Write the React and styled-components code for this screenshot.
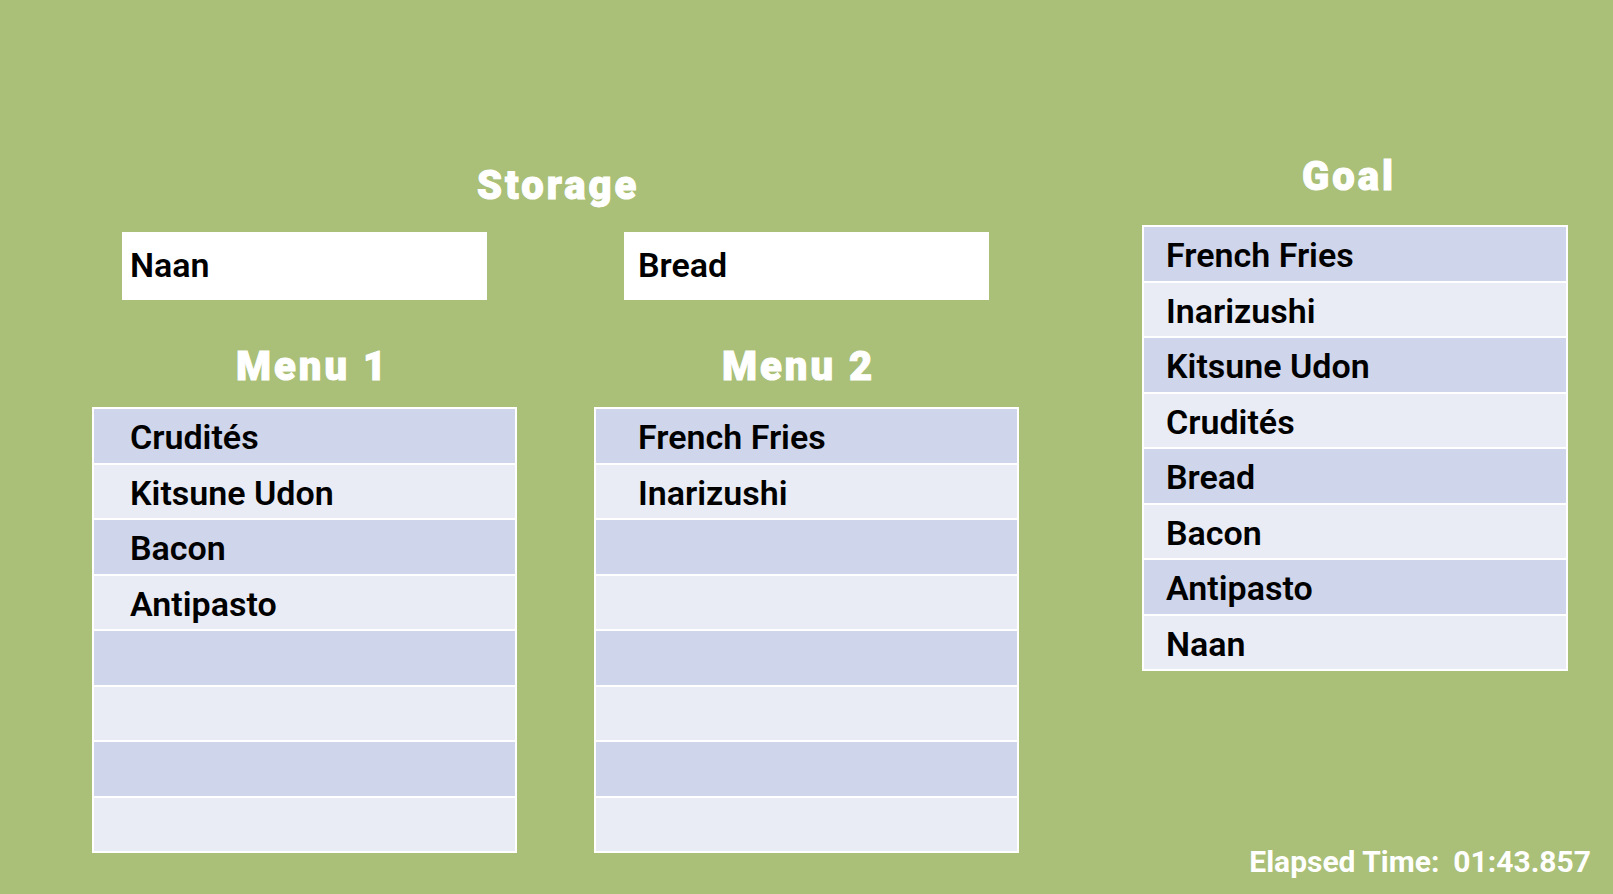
import React from "react";
import styled, { createGlobalStyle } from "styled-components";

const GlobalStyle = createGlobalStyle`
  *, *::before, *::after { box-sizing: border-box; }
  body {
    margin: 0;
    background: #aabf77;
    font-family: Roboto, "Liberation Sans", sans-serif;
  }
`;

const Page = styled.main`
  display: grid;
  grid-template-columns: 927fr 449fr;
  column-gap: 123px;
  min-height: 100vh;
  padding: 153px 22px 14px 92px;
`;

const Kitchen = styled.section`
  padding-top: 9px;
`;

const Sidebar = styled.aside`
  display: flex;
  flex-direction: column;
  justify-content: space-between;
`;

const GoalArea = styled.div`
  padding-right: 23px;
`;

const Columns = styled.div`
  display: grid;
  grid-template-columns: 1fr 1fr;
  column-gap: 77px;
`;

const Title = styled.h2`
  margin: 0;
  padding-left: ${(p) => p.$indent}px;
  color: #fff;
  font-size: 40px;
  line-height: 48px;
  font-weight: 900;
  letter-spacing: 3px;
  -webkit-text-stroke: 1px #fff;
  white-space: nowrap;
`;

const Slot = styled.div`
  display: flex;
  align-items: center;
  height: 68px;
  margin: 22px 30px 43px;
  padding: 0 0 2px ${(p) => p.$inset}px;
  background: #fff;
  font-size: 34px;
  line-height: 40px;
  font-weight: 600;
`;

const List = styled.ol`
  display: grid;
  grid-auto-rows: 1fr;
  gap: 2px;
  height: 446px;
  margin: ${(p) => p.$space}px 0 0;
  padding: 2px;
  background: #fff;
  list-style: none;
`;

const Item = styled.li`
  display: flex;
  align-items: center;
  padding: 3px 0 0 ${(p) => p.$inset}px;
  background: #e9ebf5;
  color: #000;
  font-size: 34px;
  line-height: 40px;
  font-weight: 600;
  white-space: nowrap;

  &:nth-child(odd) { background: #cfd5ea; }
`;

const Elapsed = styled.p`
  display: flex;
  justify-content: flex-end;
  gap: 14px;
  margin: 0;
  color: #fff;
  font-size: 30px;
  line-height: 36px;
  font-weight: 700;
  white-space: nowrap;
`;

const ROWS = 8;

function Menu({ title, items, indent, inset, space }) {
  return (
    <section>
      <Title $indent={indent}>{title}</Title>
      <List $space={space}>
        {Array.from({ length: ROWS }, (_, i) => (
          <Item key={i} $inset={inset}>{items[i]}</Item>
        ))}
      </List>
    </section>
  );
}

export default function App() {
  return (
    <Page>
      <GlobalStyle />
      <Kitchen>
        <Title $indent={385}>Storage</Title>
        <Columns>
          <Slot $inset={8}>Naan</Slot>
          <Slot $inset={14}>Bread</Slot>
          <Menu
            title="Menu 1"
            indent={144}
            inset={36}
            space={16}
            items={["Crudités", "Kitsune Udon", "Bacon", "Antipasto"]}
          />
          <Menu
            title="Menu 2"
            indent={128}
            inset={42}
            space={16}
            items={["French Fries", "Inarizushi"]}
          />
        </Columns>
      </Kitchen>
      <Sidebar>
        <GoalArea>
          <Menu
            title="Goal"
            indent={160}
            inset={22}
            space={24}
            items={["French Fries", "Inarizushi", "Kitsune Udon", "Crudités", "Bread", "Bacon", "Antipasto", "Naan"]}
          />
        </GoalArea>
        <Elapsed>
          <span>Elapsed Time:</span>
          <time>01:43.857</time>
        </Elapsed>
      </Sidebar>
    </Page>
  );
}
